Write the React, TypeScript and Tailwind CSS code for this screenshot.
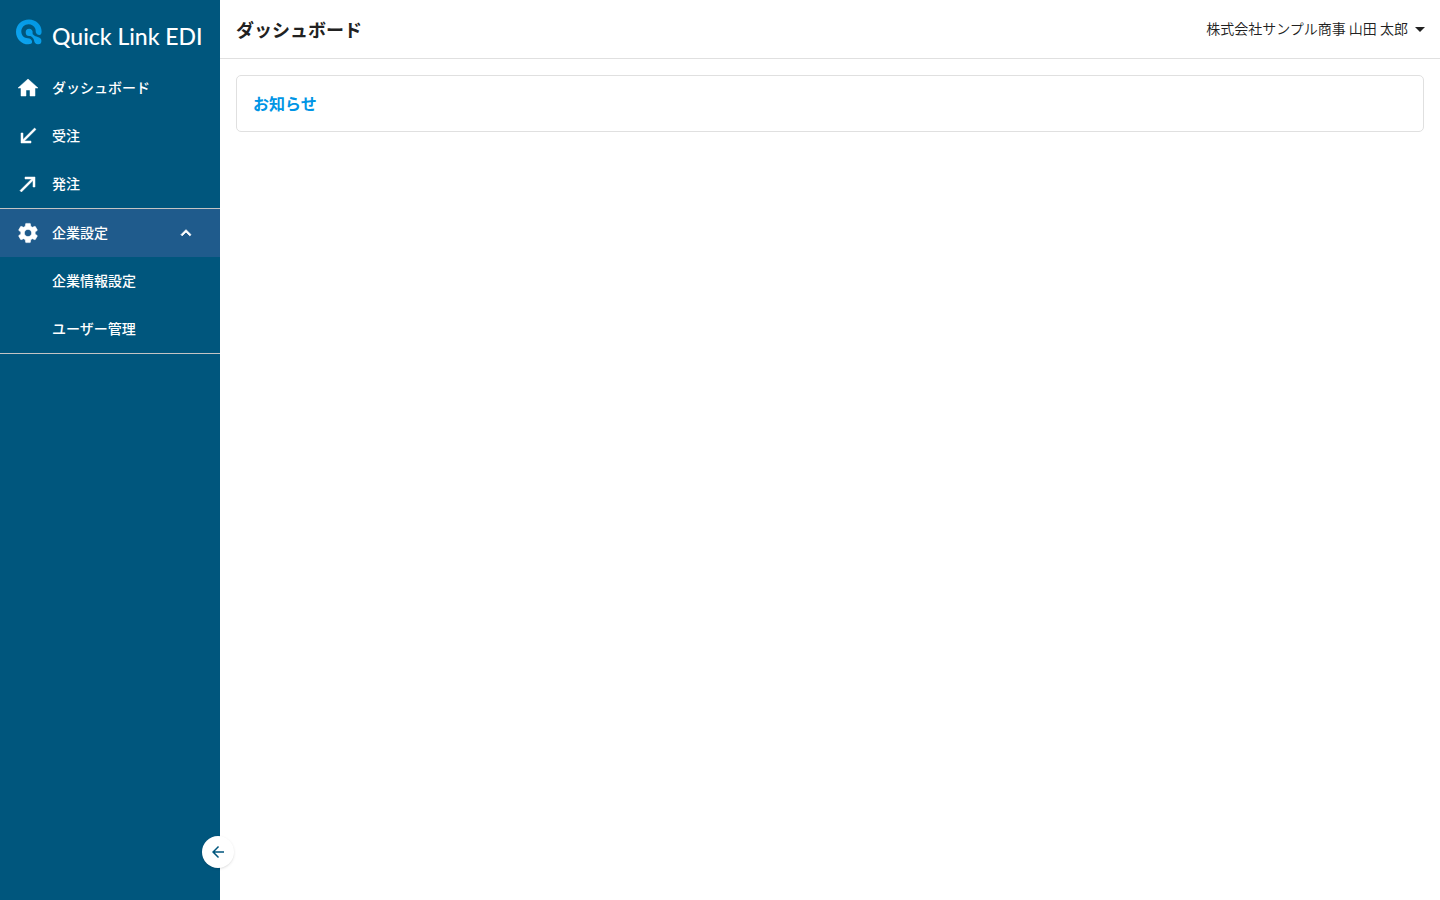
import type { ReactNode } from "react";

function Icon({ d, className }: { d: string; className: string }) {
  return (
    <svg viewBox="0 0 24 24" fill="currentColor" aria-hidden="true" className={`shrink-0 ${className}`}>
      <path d={d} />
    </svg>
  );
}

const icons = {
  home: "M10 20v-6h4v6h5v-8h3L12 3 2 12h3v8z",
  received: "M20 5.41 18.59 4 7 15.59V9H5v10h10v-2H8.41z",
  made: "M9 5v2h6.59L4 18.59 5.41 20 17 8.41V15h2V5z",
  settings:
    "M19.14 12.94c.04-.3.06-.61.06-.94 0-.32-.02-.64-.07-.94l2.03-1.58c.18-.14.23-.41.12-.61l-1.92-3.32c-.12-.22-.37-.29-.59-.22l-2.39.96c-.5-.38-1.03-.7-1.62-.94l-.36-2.54c-.04-.24-.24-.41-.48-.41h-3.84c-.24 0-.43.17-.47.41l-.36 2.54c-.59.24-1.13.57-1.62.94l-2.39-.96c-.22-.08-.47 0-.59.22L2.74 8.87c-.12.21-.08.47.12.61l2.03 1.58c-.05.3-.09.63-.09.94s.02.64.07.94l-2.03 1.58c-.18.14-.23.41-.12.61l1.92 3.32c.12.22.37.29.59.22l2.39-.96c.5.38 1.03.7 1.62.94l.36 2.54c.05.24.24.41.48.41h3.84c.24 0 .44-.17.47-.41l.36-2.54c.59-.24 1.13-.56 1.62-.94l2.39.96c.22.08.47 0 .59-.22l1.92-3.32c.12-.22.07-.47-.12-.61zM12 15.6c-1.98 0-3.6-1.62-3.6-3.6s1.62-3.6 3.6-3.6 3.6 1.62 3.6 3.6-1.62 3.6-3.6 3.6",
  less: "m12 8-6 6 1.41 1.41L12 10.83l4.59 4.58L18 14z",
  back: "M20 11H7.83l5.59-5.59L12 4l-8 8 8 8 1.41-1.41L7.83 13H20z",
  dropDown: "m7 10 5 5 5-5z",
};

function Logo() {
  return (
    <a href="#" className="flex h-16 items-center gap-2.5 pl-4 text-white">
      <svg viewBox="0 0 26 26" className="size-[26px] shrink-0" aria-hidden="true">
        <defs>
          <linearGradient id="mark" x1="0" y1="1" x2="1" y2="0">
            <stop offset="0" stopColor="#0fa5f0" />
            <stop offset="1" stopColor="#0096e2" />
          </linearGradient>
        </defs>
        <g fill="url(#mark)">
          <path d="M13 .6C20 .6 25.600 5.800 25.600 12.600c0 1.600-.3 2.700-1.300 3.200-1.700.8-4.100-.6-4.500-2.600-.2-1.300 0-2.400-.6-3.600-1-2.700-3.700-4.400-6.600-4.400-4.100 0-7.300 3.200-7.300 7.200 0 4.200 3.200 6.600 6.500 6.800 2.300.1 4.300 1.500 4.300 3.600 0 1.800-1.500 2.500-3.800 2.500C5.600 25.300 0 19.800 0 12.900 0 5.900 5.700.6 13 .6z" />
          <path d="M13.200 9.700a3.500 3.500 0 0 1 3.400 4.100c-.1 1.200.2 1.700 1.100 2.300 1.200.9 2.200 1.600 4 1.800 2 .3 3.700 1.700 3.700 3.800a3.400 3.400 0 0 1-3.500 3.500c-2.200 0-3.400-1.500-3.700-3.300-.3-1.900-1-2.700-2-3.700-.8-.9-1.500-1.200-2.800-1.300a3.600 3.600 0 0 1-.2-7.200z" />
        </g>
      </svg>
      <span className="pt-2 font-[Lato] text-[23px] leading-8 font-medium whitespace-nowrap">Quick Link EDI</span>
    </a>
  );
}

function NavLink({ icon, children }: { icon?: string; children: ReactNode }) {
  return (
    <li>
      <a href="#" className="flex h-12 items-center gap-3 px-4">
        {icon ? <Icon d={icon} className="size-6 stroke-current stroke-[0.5]" /> : <span className="w-6" />}
        <span className="pb-0.5">{children}</span>
      </a>
    </li>
  );
}

function Sidebar() {
  return (
    <aside className="relative w-[220px] shrink-0 bg-[#00567d] text-sm font-medium text-white">
      <Logo />
      <nav>
        <ul>
          <NavLink icon={icons.home}>ダッシュボード</NavLink>
          <NavLink icon={icons.received}>受注</NavLink>
          <NavLink icon={icons.made}>発注</NavLink>
          <li className="border-y border-[#c4c4c4]">
            <button type="button" aria-expanded="true" className="flex h-12 w-full items-center gap-3 bg-[#1f5b8c] pr-6 pl-4">
              <Icon d={icons.settings} className="size-6 stroke-current stroke-[0.5]" />
              <span className="flex-1 pb-0.5 text-left">企業設定</span>
              <Icon d={icons.less} className="size-5 stroke-current stroke-1" />
            </button>
            <ul>
              <NavLink>企業情報設定</NavLink>
              <NavLink>ユーザー管理</NavLink>
            </ul>
          </li>
        </ul>
      </nav>
      {/* collapse toggle sits on the sidebar edge */}
      <button
        type="button"
        aria-label="メニューを閉じる"
        className="absolute -right-3.5 bottom-8 flex size-8 items-center justify-center rounded-full bg-white text-[#00567d] shadow-sm"
      >
        <Icon d={icons.back} className="size-[18px]" />
      </button>
    </aside>
  );
}

export default function App() {
  return (
    <div className="flex min-h-screen bg-white font-['Noto_Sans_CJK_JP',sans-serif] text-[#212121]">
      <Sidebar />
      <div className="min-w-0 flex-1">
        <header className="flex items-center justify-between border-b border-[#e0e0e0] py-[15px] pr-2 pl-4">
          <h1 className="text-lg font-bold">ダッシュボード</h1>
          <button type="button" className="flex items-center text-sm font-[350]">
            <span className="pb-0.5">株式会社サンプル商事 山田 太郎</span>
            <Icon d={icons.dropDown} className="size-6" />
          </button>
        </header>
        <main className="p-4">
          <section className="rounded-[5px] border border-[#e0e0e0] p-4">
            <h2 className="text-base leading-[23px] font-bold text-[#0095e5]">お知らせ</h2>
          </section>
        </main>
      </div>
    </div>
  );
}
